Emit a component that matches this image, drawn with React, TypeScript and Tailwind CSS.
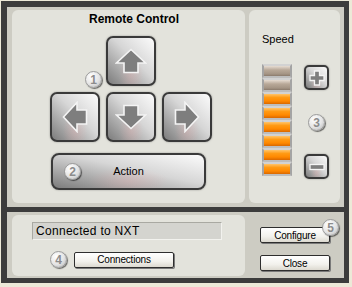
import React from 'react';

const FONT = "font-['Liberation_Sans',Arial,sans-serif]";

const Badge = ({ n, className = '' }: { n: number; className?: string }) => (
  <div
    className={`flex h-[17px] w-[17px] items-center justify-center rounded-full border border-[#9c9c9c] bg-[radial-gradient(circle_at_35%_30%,#ffffff,#e4e4e4_55%,#b4b4b4)] text-[12px] font-bold leading-none text-[#8c8c8c] shadow-[1px_1px_1px_rgba(0,0,0,0.55)] ${className}`}
  >
    {n}
  </div>
);

const Arrow = ({ rotate }: { rotate: string }) => (
  <svg width="32" height="26" viewBox="0 0 32 26" className={rotate}>
    <polygon
      points="16,1.5 30.5,15 23,15 23,24.5 9,24.5 9,15 1.5,15"
      fill="#7e7e7e"
      stroke="#f4f4f4"
      strokeWidth="1.6"
      strokeLinejoin="miter"
    />
  </svg>
);

const padBtn =
  'flex items-center justify-center rounded-[7px] border-2 border-[#3a3a3a] bg-[radial-gradient(ellipse_at_50%_80%,rgba(255,170,170,0.22),transparent_38%),linear-gradient(to_bottom_left,#fbfbfb,#d6d6d6_45%,#7c7c7c)] shadow-[0_0_2px_rgba(0,0,0,0.35)]';

const xpBtn =
  'flex items-center justify-center rounded-[2px] border border-[#2e2e2e] bg-[linear-gradient(to_bottom,#ffffff,#f2f1ec_60%,#dcd9d0)] text-[10px] tracking-[-0.2px] text-black shadow-[1px_1px_0_#7a7a7a]';

const Segment = ({ on }: { on: boolean }) => (
  <div className="h-[14px] w-[30px] border-2 border-t-[#d2d2d2] border-l-[#a4a4a4] border-r-[#a4a4a4] border-b-[#bdbdbd] bg-[#a8a8a8]">
    <div
      className={
        on
          ? 'h-full w-full bg-[linear-gradient(to_bottom,#ffc46a,#ff9a14_35%,#ff8800_70%,#d96800)]'
          : 'h-full w-full bg-[linear-gradient(to_bottom,#e6dcd2,#b8a898_40%,#a49484_80%,#8a7a6c)]'
      }
    />
  </div>
);

export default function App() {
  return (
    <div className={`h-[287px] w-[352px] bg-[#ece9d8] pb-[4px] pl-px pr-[3px] pt-px ${FONT}`}>
      <div className="flex h-full flex-col border-b-[5px] border-l-[6px] border-r-[5px] border-t-[6px] border-[#3c3c3c] bg-[#cdccc3]">
        {/* Top section */}
        <div className="flex h-[200px] gap-[4px] pb-[4px] pl-[5px] pr-[4px] pt-[3px]">
          {/* Remote control panel */}
          <div className="relative flex w-[233px] flex-col rounded-[6px] bg-[#e3e3dc]">
            <div className="pl-[11px] pt-[2px] text-center text-[12px] font-bold leading-[14px] text-black">
              Remote Control
            </div>
            <div className="ml-[38px] mt-[10px] grid w-[162px] grid-cols-[50px_50px_50px] gap-[6px]">
              <div />
              <div className={`${padBtn} h-[50px]`}>
                <Arrow rotate="" />
              </div>
              <div />
              <div className={`${padBtn} h-[50px]`}>
                <Arrow rotate="-rotate-90" />
              </div>
              <div className={`${padBtn} h-[50px]`}>
                <Arrow rotate="rotate-180" />
              </div>
              <div className={`${padBtn} h-[50px]`}>
                <Arrow rotate="rotate-90" />
              </div>
            </div>
            <Badge n={1} className="absolute left-[73px] top-[61px]" />
            <div className={`${padBtn} relative ml-[39px] mt-[11px] h-[37px] w-[155px] !rounded-[8px] text-[11px] text-black`}>
              Action
              <Badge n={2} className="absolute left-[11px] top-[8px]" />
            </div>
          </div>

          {/* Speed panel */}
          <div className="flex flex-1 flex-col rounded-[6px] bg-[#e3e3dc] pl-[13px] pt-[23px]">
            <div className="h-[13px] text-[11px] leading-[13px] text-black">Speed</div>
            <div className="mt-[18px] flex">
              <div className="flex flex-col">
                <Segment on={false} />
                <Segment on={false} />
                <Segment on />
                <Segment on />
                <Segment on />
                <Segment on />
                <Segment on />
                <Segment on />
              </div>
              <div className="ml-[12px] mt-[1px] flex flex-col items-center">
                <div className={`${padBtn} h-[25px] w-[25px] !rounded-[5px]`}>
                  <svg width="16" height="16" viewBox="0 0 16 16">
                    <polygon
                      points="5.5,1 10.5,1 10.5,5.5 15,5.5 15,10.5 10.5,10.5 10.5,15 5.5,15 5.5,10.5 1,10.5 1,5.5 5.5,5.5"
                      fill="#7e7e7e"
                      stroke="#f4f4f4"
                      strokeWidth="1.3"
                    />
                  </svg>
                </div>
                <Badge n={3} className="mt-[24px]" />
                <div className={`${padBtn} mt-[23px] h-[25px] w-[25px] !rounded-[5px]`}>
                  <svg width="16" height="8" viewBox="0 0 16 8">
                    <rect x="1" y="1.5" width="14" height="5" fill="#7e7e7e" stroke="#f4f4f4" strokeWidth="1.3" />
                  </svg>
                </div>
              </div>
            </div>
          </div>
        </div>

        {/* Bottom section */}
        <div className="flex flex-1 border-t-[5px] border-[#3c3c3c] pb-[2px] pl-[5px] pt-[3px]">
          <div className="flex w-[233px] flex-col rounded-[6px] bg-[#e3e3dc] pt-[7px]">
            <div className="ml-[20px] flex h-[18px] w-[190px] items-center border border-b-[#f2f2ee] border-l-[#a9a9a2] border-r-[#f2f2ee] border-t-[#a9a9a2] bg-[#d4d4cf] pl-[3px] text-[12px] tracking-[0.3px] text-black">
              Connected to NXT
            </div>
            <div className="ml-[38px] mt-[11px] flex items-center gap-[7px]">
              <Badge n={4} />
              <div className={`${xpBtn} h-[16px] w-[100px]`}>Connections</div>
            </div>
          </div>
          <div className="flex flex-1 flex-col pl-[15px] pt-[12px]">
            <div className={`${xpBtn} relative h-[16px] w-[70px]`}>
              Configure
              <Badge n={5} className="absolute left-[61px] top-[-9px]" />
            </div>
            <div className={`${xpBtn} mt-[12px] h-[16px] w-[70px]`}>Close</div>
          </div>
        </div>
      </div>
    </div>
  );
}
